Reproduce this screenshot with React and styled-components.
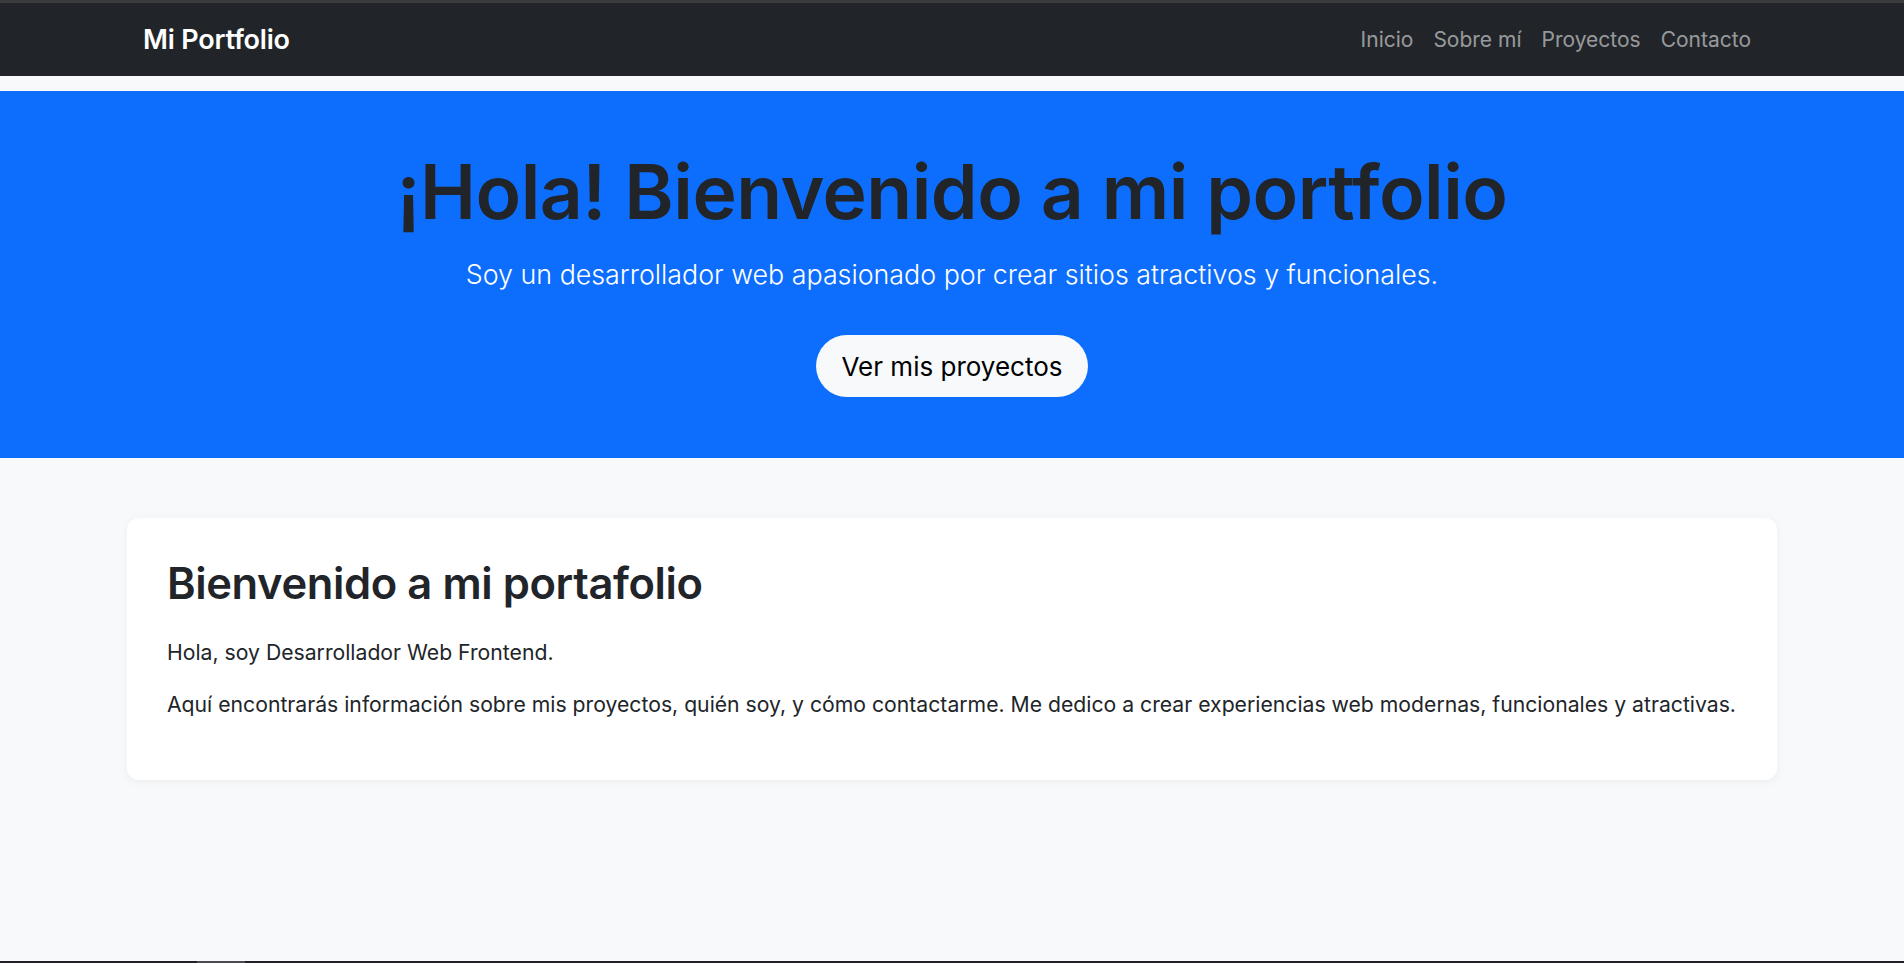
import React from "react";
import styled, { createGlobalStyle } from "styled-components";

const GlobalStyle = createGlobalStyle`
  html, body {
    margin: 0;
    padding: 0;
  }
  body {
    font-family: "Inter", "Noto Sans", sans-serif;
    background: #f8f9fa;
    color: #212529;
  }
  * {
    box-sizing: border-box;
  }
`;

const Page = styled.div`
  min-height: 100vh;
  display: flex;
  flex-direction: column;
`;

const Navbar = styled.nav`
  background: #212529;
  border-top: 3px solid #3a3b3d;
  height: 76px;
  display: flex;
  justify-content: center;
`;

const NavInner = styled.div`
  width: 1650px;
  padding: 0 16px;
  display: flex;
  align-items: center;
  justify-content: space-between;
`;

const Brand = styled.a`
  color: #fff;
  font-size: 27px;
  font-weight: 600;
  text-decoration: none;
  letter-spacing: -0.2px;
`;

const NavLinks = styled.ul`
  list-style: none;
  margin: 0;
  padding: 0;
  display: flex;
`;

const NavLink = styled.a`
  display: block;
  padding: 8px 10px;
  font-size: 21px;
  color: rgba(255, 255, 255, 0.55);
  text-decoration: none;
`;

const Hero = styled.header`
  margin-top: 15px;
  background: #0d6efd;
  height: 367px;
  display: flex;
  flex-direction: column;
  align-items: center;
  padding-top: 56px;
  text-align: center;
`;

const HeroTitle = styled.h1`
  margin: 0;
  font-size: 75px;
  line-height: 90px;
  font-weight: 600;
  color: #212529;
  letter-spacing: -0.5px;
`;

const HeroLead = styled.p`
  margin: 17px 0 0;
  font-size: 26.8px;
  line-height: 40px;
  font-weight: 300;
  color: #fff;
`;

const HeroButton = styled.a`
  margin-top: 41px;
  height: 62px;
  padding: 0 25px;
  display: flex;
  align-items: center;
  background: #f8f9fa;
  color: #000;
  border-radius: 31px;
  font-size: 26px;
  text-decoration: none;
`;

const Main = styled.main`
  flex: 1;
  display: flex;
  justify-content: center;
  padding-top: 60px;
`;

const Card = styled.section`
  width: 1650px;
  height: 262px;
  background: #fff;
  border-radius: 12px;
  box-shadow: 0 2px 10px rgba(0, 0, 0, 0.05);
  padding: 40px 40px;
`;

const CardTitle = styled.h2`
  margin: 0 0 28px;
  font-size: 43.5px;
  line-height: 50px;
  font-weight: 600;
  color: #212529;
  letter-spacing: -0.4px;
`;

const CardText = styled.p`
  margin: 0 0 ${(p) => p.$gap || 0}px;
  font-size: 21.2px;
  line-height: 32px;
  color: #212529;
`;

const BottomBar = styled.div`
  height: 2px;
  background: #202124;
  display: flex;
`;

const BarThumb = styled.div`
  margin-left: 197px;
  width: 48px;
  background: #4a4b4e;
`;

const links = ["Inicio", "Sobre mí", "Proyectos", "Contacto"];

const App = () => {
  return (
    <Page>
      <GlobalStyle />
      <Navbar>
        <NavInner>
          <Brand href="#">Mi Portfolio</Brand>
          <NavLinks>
            {links.map((l) => (
              <li key={l}>
                <NavLink href="#">{l}</NavLink>
              </li>
            ))}
          </NavLinks>
        </NavInner>
      </Navbar>
      <Hero>
        <HeroTitle>¡Hola! Bienvenido a mi portfolio</HeroTitle>
        <HeroLead>
          Soy un desarrollador web apasionado por crear sitios atractivos y funcionales.
        </HeroLead>
        <HeroButton href="#">Ver mis proyectos</HeroButton>
      </Hero>
      <Main>
        <Card>
          <CardTitle>Bienvenido a mi portafolio</CardTitle>
          <CardText $gap={20}>Hola, soy Desarrollador Web Frontend.</CardText>
          <CardText>
            Aquí encontrarás información sobre mis proyectos, quién soy, y cómo contactarme. Me
            dedico a crear experiencias web modernas, funcionales y atractivas.
          </CardText>
        </Card>
      </Main>
      <BottomBar>
        <BarThumb />
      </BottomBar>
    </Page>
  );
};

export default App;
